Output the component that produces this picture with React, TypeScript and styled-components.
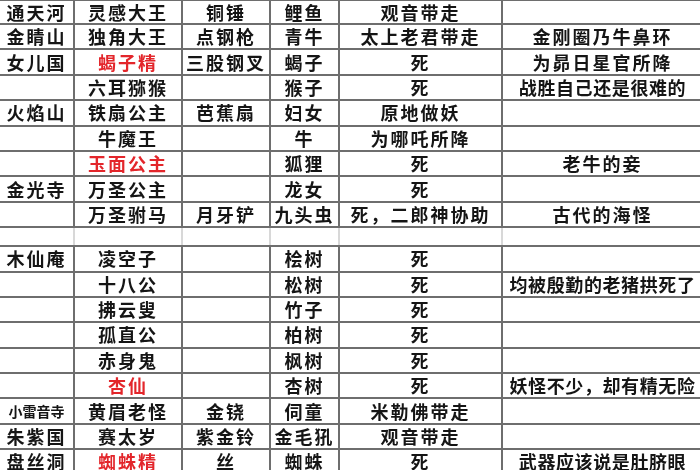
import React from 'react';
import styled, { createGlobalStyle } from 'styled-components';

const GlobalStyle = createGlobalStyle`
    html, body {
        margin: 0;
        padding: 0;
        background: #ffffff;
        overflow: hidden;
    }
`;

const Page = styled.div`
    width: 700px;
    height: 470px;
    overflow: hidden;
    background: #ffffff;
`;

const Table = styled.table`
    border-collapse: collapse;
    table-layout: fixed;
    width: 704px;
    margin: -1px 0 0 -2px;
    font-family: 'Noto Sans CJK SC', 'Noto Sans', sans-serif;
    font-weight: 700;
    color: #151515;
    filter: blur(0.45px);
`;

const Row = styled.tr<{ $h?: number }>`
    height: ${(p) => (p.$h ? p.$h : 25.4)}px;
`;

const Cell = styled.td<{ $red?: boolean; $small?: boolean; $tight?: boolean; $gap?: boolean }>`
    border: 2px solid #6e6e6e;
    ${(p) => p.$gap && 'border-left-color: #d8d8d8; border-right-color: #d8d8d8;'}
    padding: 0;
    text-align: center;
    white-space: nowrap;
    font-size: ${(p) => (p.$small ? '14px' : '18px')};
    letter-spacing: ${(p) => (p.$small ? '0' : p.$tight ? '0.6px' : '2px')};
    line-height: 21px;
    color: ${(p) => (p.$red ? '#e3262b' : '#151515')};
`;

type Entry = string | { t: string; red?: boolean; small?: boolean };

const top: Entry[][] = [
    ['通天河', '灵感大王', '铜锤', '鲤鱼', '观音带走', ''],
    ['金睛山', '独角大王', '点钢枪', '青牛', '太上老君带走', '金刚圈乃牛鼻环'],
    ['女儿国', { t: '蝎子精', red: true }, '三股钢叉', '蝎子', '死', '为昴日星官所降'],
    ['', '六耳猕猴', '', '猴子', '死', '战胜自己还是很难的'],
    ['火焰山', '铁扇公主', '芭蕉扇', '妇女', '原地做妖', ''],
    ['', '牛魔王', '', '牛', '为哪吒所降', ''],
    ['', { t: '玉面公主', red: true }, '', '狐狸', '死', '老牛的妾'],
    ['金光寺', '万圣公主', '', '龙女', '死', ''],
    ['', '万圣驸马', '月牙铲', '九头虫', '死，二郎神协助', '古代的海怪'],
];

const bottom: Entry[][] = [
    ['木仙庵', '凌空子', '', '桧树', '死', ''],
    ['', '十八公', '', '松树', '死', '均被殷勤的老猪拱死了'],
    ['', '拂云叟', '', '竹子', '死', ''],
    ['', '孤直公', '', '柏树', '死', ''],
    ['', '赤身鬼', '', '枫树', '死', ''],
    ['', { t: '杏仙', red: true }, '', '杏树', '死', '妖怪不少，却有精无险'],
    [{ t: '小雷音寺', small: true }, '黄眉老怪', '金铙', '伺童', '米勒佛带走', ''],
    ['朱紫国', '赛太岁', '紫金铃', '金毛犼', '观音带走', ''],
    ['盘丝洞', { t: '蜘蛛精', red: true }, '丝', '蜘蛛', '死', '武器应该说是肚脐眼'],
];

const widths = [75, 108, 88, 69, 163, 201];

const renderRow = (cells: Entry[], key: string, h?: number) => (
    <Row key={key} $h={h}>
        {cells.map((c, i) => {
            const e = typeof c === 'string' ? { t: c } : c;
            return (
                <Cell key={i} $red={e.red} $small={e.small} $tight={e.t.length > 7}>
                    {e.t}
                </Cell>
            );
        })}
    </Row>
);

const App = () => {
    return (
        <Page>
            <GlobalStyle />
            <Table>
                <colgroup>
                    {widths.map((w, i) => (
                        <col key={i} style={{ width: w }} />
                    ))}
                </colgroup>
                <tbody>
                    {top.map((r, i) => renderRow(r, 't' + i, i === 0 ? 24 : undefined))}
                    <Row $h={19}>
                        {widths.map((_, i) => (
                            <Cell key={i} $gap />
                        ))}
                    </Row>
                    {bottom.map((r, i) => renderRow(r, 'b' + i))}
                </tbody>
            </Table>
        </Page>
    );
};

export default App;
